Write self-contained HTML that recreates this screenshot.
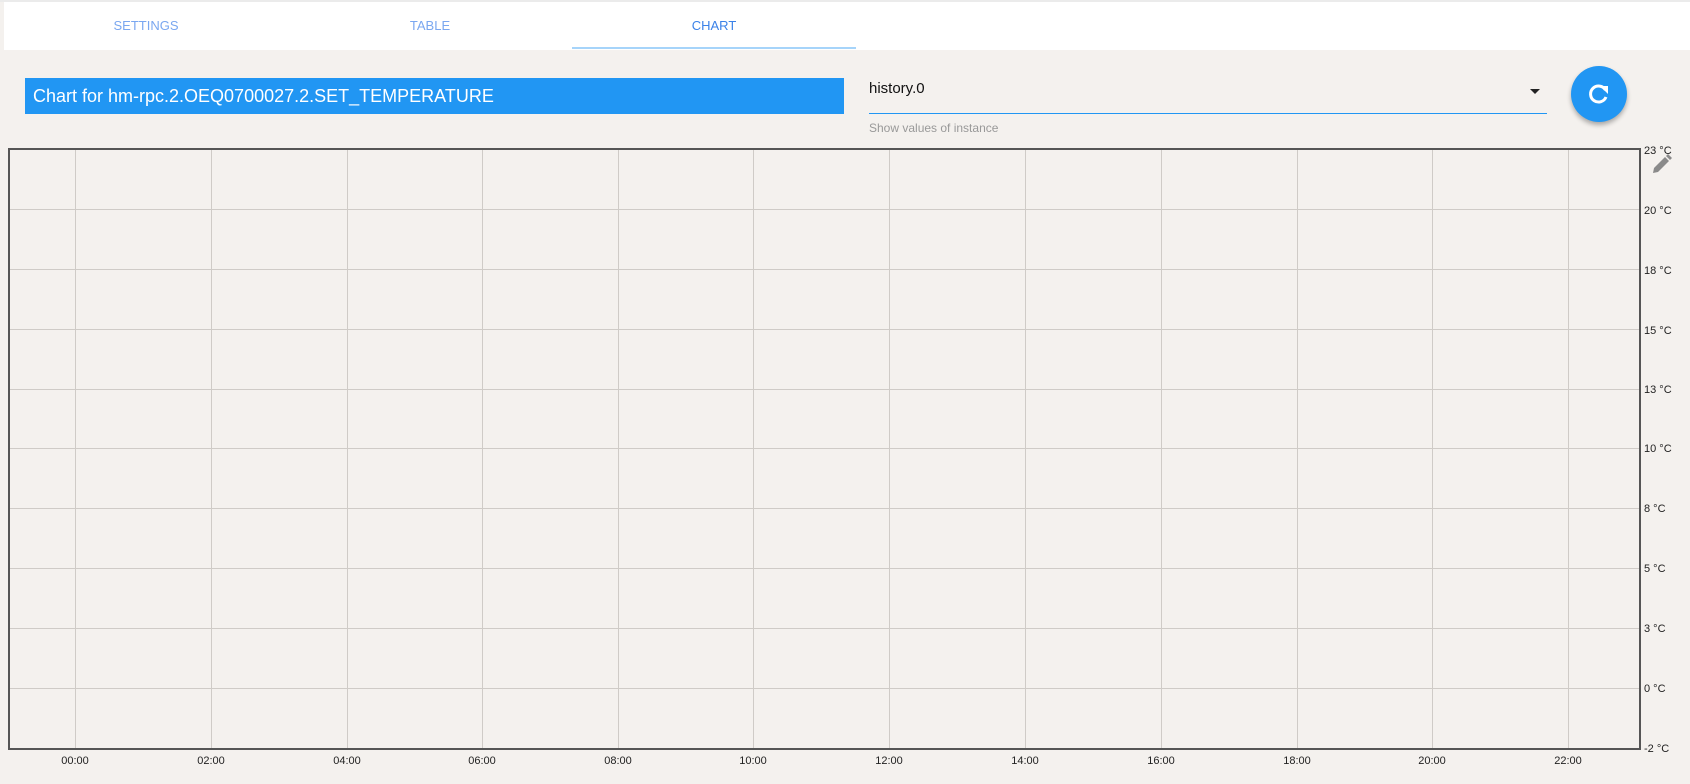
<!DOCTYPE html>
<html><head><meta charset="utf-8"><style>
html,body{margin:0;padding:0}
body{width:1690px;height:784px;background:#f4f1ee;position:relative;overflow:hidden;font-family:"Segoe UI","Liberation Sans",sans-serif}
.top{position:absolute;left:0;top:0;width:1690px;height:2px;background:#ebebeb}
.bar{position:absolute;left:4px;top:2px;width:1686px;height:48px;background:#fff}
.tab{position:absolute;top:2px;width:284px;height:48px;line-height:48px;text-align:center;font-size:13px;color:#7aa7f0}
.ind{position:absolute;left:572px;top:47px;width:284px;height:2px;background:#a6d4fa}
.title{position:absolute;left:25px;top:78px;width:819px;height:36px;background:#2196f3;color:#fff;font-size:18px;line-height:36px;padding-left:8px;box-sizing:border-box}
.sel{position:absolute;left:869px;top:80px;font-size:15px;color:#111}
.ul{position:absolute;left:869px;top:113px;width:678px;height:1px;background:#2196f3}
.help{position:absolute;left:869px;top:121px;font-size:12px;color:#999}
.arr{position:absolute;left:1530px;top:89px;width:0;height:0;border-left:5px solid transparent;border-right:5px solid transparent;border-top:5px solid #222}
.fab{position:absolute;left:1571px;top:66px;width:56px;height:56px;border-radius:50%;background:#2196f3;box-shadow:0 3px 5px rgba(0,0,0,.3)}
</style></head><body>
<div class="top"></div>
<div class="bar"></div>
<div class="tab" style="left:4px">SETTINGS</div>
<div class="tab" style="left:288px">TABLE</div>
<div class="tab" style="left:572px;color:#3b82e8">CHART</div>
<div class="ind"></div>
<div class="title">Chart for hm-rpc.2.OEQ0700027.2.SET_TEMPERATURE</div>
<div class="sel">history.0</div>
<div class="arr"></div>
<div class="ul"></div>
<div class="help">Show values of instance</div>
<div class="fab"><svg width="56" height="56" viewBox="0 0 56 56"><path d="M34.5 24 A8 8 0 1 0 35 31" fill="none" stroke="#fff" stroke-width="3"/><path d="M29 20 L37 20 L37 28 Z" fill="#fff"/></svg></div>
<svg style="position:absolute;left:0;top:0" width="1690" height="784" font-family="Liberation Sans, Arial, sans-serif">
<g stroke="#cfcbc7" stroke-width="1">
<line x1="75.5" y1="150" x2="75.5" y2="748"/><line x1="211.5" y1="150" x2="211.5" y2="748"/><line x1="347.5" y1="150" x2="347.5" y2="748"/><line x1="482.5" y1="150" x2="482.5" y2="748"/><line x1="618.5" y1="150" x2="618.5" y2="748"/><line x1="753.5" y1="150" x2="753.5" y2="748"/><line x1="889.5" y1="150" x2="889.5" y2="748"/><line x1="1025.5" y1="150" x2="1025.5" y2="748"/><line x1="1161.5" y1="150" x2="1161.5" y2="748"/><line x1="1297.5" y1="150" x2="1297.5" y2="748"/><line x1="1432.5" y1="150" x2="1432.5" y2="748"/><line x1="1568.5" y1="150" x2="1568.5" y2="748"/>
<line x1="10" y1="209.5" x2="1640" y2="209.5"/><line x1="10" y1="269.5" x2="1640" y2="269.5"/><line x1="10" y1="329.5" x2="1640" y2="329.5"/><line x1="10" y1="389.5" x2="1640" y2="389.5"/><line x1="10" y1="448.5" x2="1640" y2="448.5"/><line x1="10" y1="508.5" x2="1640" y2="508.5"/><line x1="10" y1="568.5" x2="1640" y2="568.5"/><line x1="10" y1="628.5" x2="1640" y2="628.5"/><line x1="10" y1="688.5" x2="1640" y2="688.5"/>
</g>
<rect x="9" y="149" width="1631" height="600" fill="none" stroke="#555" stroke-width="2"/>
<g font-size="11" fill="#222">
<text x="1644" y="154">23 °C</text><text x="1644" y="214">20 °C</text><text x="1644" y="274">18 °C</text><text x="1644" y="334">15 °C</text><text x="1644" y="393">13 °C</text><text x="1644" y="452">10 °C</text><text x="1644" y="512">8 °C</text><text x="1644" y="572">5 °C</text><text x="1644" y="632">3 °C</text><text x="1644" y="692">0 °C</text><text x="1644" y="752">-2 °C</text>
</g>
<g font-size="11" fill="#222" text-anchor="middle">
<text x="75" y="764">00:00</text><text x="211" y="764">02:00</text><text x="347" y="764">04:00</text><text x="482" y="764">06:00</text><text x="618" y="764">08:00</text><text x="753" y="764">10:00</text><text x="889" y="764">12:00</text><text x="1025" y="764">14:00</text><text x="1161" y="764">16:00</text><text x="1297" y="764">18:00</text><text x="1432" y="764">20:00</text><text x="1568" y="764">22:00</text>
</g>
<path d="M1653 173 L1654 168 L1665 157 L1669 161 L1658 172 Z M1666 156 L1668 154 L1672 158 L1670 160 Z" fill="#8a8a8a"/>
</svg>
</body></html>
